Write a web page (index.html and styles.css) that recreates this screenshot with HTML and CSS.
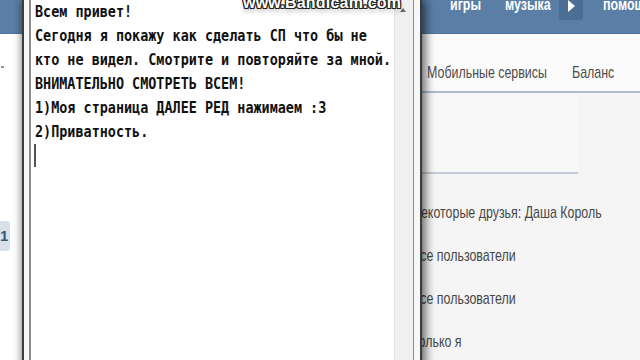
FILE: index.html
```html
<!DOCTYPE html>
<html lang="ru">
<head>
<meta charset="utf-8">
<title>Блокнот</title>
<link rel="stylesheet" href="styles.css">
</head>
<body>
<div class="screen">
  <div class="vk">
    <div class="vk-head">
      <nav class="vk-nav">
        <span class="nav-item"><span class="sx">игры</span></span>
        <span class="nav-item"><span class="sx">музыка</span></span>
        <span class="nav-more"><span class="tri"></span></span>
        <span class="nav-item"><span class="sx">помощь</span></span>
      </nav>
    </div>
    <div class="vk-body">
      <aside class="vk-side">
        <span class="dash"></span>
        <span class="badge">1</span>
      </aside>
      <main class="vk-main">
        <div class="tabs">
          <span class="tab"><span class="sx">Мобильные сервисы</span></span>
          <span class="tab"><span class="sx">Баланс</span></span>
        </div>
        <div class="section"></div>
        <ul class="rows">
          <li><span class="sx">Некоторые друзья: Даша Король</span></li>
          <li><span class="sx">Все пользователи</span></li>
          <li><span class="sx">Все пользователи</span></li>
          <li><span class="sx">Только я</span></li>
        </ul>
      </main>
    </div>
  </div>

  <div class="np">
    <div class="np-edit">
      <div class="np-text">
<pre class="np-pre">Всем привет!
Сегодня я покажу как сделать СП что бы не
кто не видел. Смотрите и повторяйте за мной.
ВНИМАТЕЛЬНО СМОТРЕТЬ ВСЕМ!
1)Моя страница ДАЛЕЕ РЕД нажимаем :3
2)Приватность.
<span class="caret"></span></pre>
      </div>
      <div class="np-scroll"><span class="up"></span></div>
    </div>
  </div>

  <div class="watermark">www.Bandicam.com</div>
</div>
</body>
</html>
```
FILE: styles.css
```css
html, body {
  margin: 0;
  padding: 0;
}
body {
  width: 640px;
  height: 360px;
  overflow: hidden;
  background: #fff;
  font-family: "Liberation Sans", Arial, sans-serif;
}
.screen {
  position: relative;
  width: 640px;
  height: 360px;
  overflow: hidden;
}
.sx {
  display: inline-block;
  transform: scaleX(0.73);
  transform-origin: 0 50%;
  white-space: nowrap;
}

/* ---------- VK page behind ---------- */
.vk {
  display: flex;
  flex-direction: column;
  height: 360px;
}
.vk-head {
  height: 33px;
  background: #5a7ea6;
  border-bottom: 1px solid #4f7299;
  flex: none;
  overflow: hidden;
}
.vk-nav {
  display: flex;
  align-items: flex-start;
  padding-left: 450px;
  margin-top: -5px;
}
.nav-item {
  flex: none;
  color: #fff;
  font-weight: bold;
  font-size: 17px;
  line-height: 20px;
  width: 55px;
}
.nav-more {
  flex: none;
  width: 24px;
  height: 25px;
  background: #4b6e95;
  border-radius: 0 0 3px 3px;
  margin-left: -1px;
  margin-right: 20px;
  display: flex;
  justify-content: center;
  padding-top: 5px;
  box-sizing: border-box;
}
.tri {
  width: 0;
  height: 0;
  border-top: 6px solid transparent;
  border-bottom: 6px solid transparent;
  border-left: 7px solid #fff;
}
.vk-body {
  flex: 1;
  display: flex;
}
.vk-side {
  width: 22px;
  flex: none;
  position: relative;
  background: #fff;
}
.dash {
  position: absolute;
  left: 1px;
  top: 32px;
  width: 3px;
  height: 2px;
  background: #8a96a3;
}
.badge {
  position: absolute;
  left: 0;
  top: 187px;
  width: 10px;
  height: 30px;
  background: #d8e1ea;
  border-radius: 0 3px 3px 0;
  color: #3b5877;
  font: bold 15px/30px "Liberation Sans", Arial, sans-serif;
}
.vk-main {
  flex: 1;
  min-width: 0;
  background: #f5f5f5;
  padding-left: 390px;
  display: flex;
  flex-direction: column;
}
.tabs {
  height: 59px;
  border-bottom: 2px solid #aebccb;
  background: #fbfbfb;
  margin-left: -390px;
  padding-left: 405px;
  padding-bottom: 9px;
  box-sizing: border-box;
  display: flex;
  align-items: flex-end;
}
.tab {
  flex: none;
  color: #4d4d4d;
  font-size: 17px;
  line-height: 18px;
}
.tab:first-child { width: 145px; }
.section {
  height: 79px;
  width: 166px;
  border-bottom: 2px solid #c3ccd6;
  background: #f8f8f8;
  margin-left: -390px;
  padding-left: 390px;
}
.rows {
  list-style: none;
  margin: 0;
  padding: 17px 0 0 0;
}
.rows li {
  height: 43px;
  line-height: 43px;
  color: #474747;
  font-size: 17px;
}

/* ---------- Notepad window ---------- */
.np {
  position: absolute;
  left: 22px;
  top: 0;
  bottom: -10px;
  width: 400px;
  box-sizing: border-box;
  border-left: 2px solid #3c3c3c;
  border-right: 2px solid #3c3c3c;
  background: #f7f7f7;
  padding: 0 6px 0 5px;
  display: flex;
  box-shadow: 4px 0 9px rgba(0, 0, 0, 0.55), -3px 0 6px rgba(0, 0, 0, 0.22);
}
.np-edit {
  flex: 1;
  min-width: 0;
  display: flex;
  background: #fff;
  border-left: 2px solid #8c8c8c;
  border-right: 1px solid #8c8c8c;
}
.np-text {
  flex: 1;
  min-width: 0;
  padding-left: 4px;
  overflow: hidden;
}
.np-pre {
  margin: 0;
  font: bold 16px/24px "DejaVu Sans Mono", "Liberation Mono", monospace;
  color: #111;
  transform: scaleX(0.84);
  transform-origin: 0 0;
  white-space: pre;
}
.caret {
  display: inline-block;
  width: 2px;
  height: 23px;
  background: #333;
  vertical-align: top;
  margin-left: -1px;
}
.np-scroll {
  width: 18px;
  flex: none;
  background: #f0f0f0;
  border-left: 1px solid #e4e4e4;
  position: relative;
}
.up {
  position: absolute;
  left: 5px;
  top: 8px;
  width: 0;
  height: 0;
  border-left: 3px solid transparent;
  border-right: 3px solid transparent;
  border-bottom: 4px solid #6a6a6a;
}

/* ---------- Recorder watermark ---------- */
.watermark {
  position: absolute;
  left: 243px;
  top: -5px;
  font: bold 16px/16px "Liberation Sans", Arial, sans-serif;
  color: #fff;
  letter-spacing: 0.2px;
  text-shadow:
    1px 0 0 #222, -1px 0 0 #222, 0 1px 0 #222, 0 -1px 0 #222,
    1px 1px 0 #222, -1px -1px 0 #222, 1px -1px 0 #222, -1px 1px 0 #222,
    0 4px 4px rgba(0, 0, 0, 0.25);
}
```
